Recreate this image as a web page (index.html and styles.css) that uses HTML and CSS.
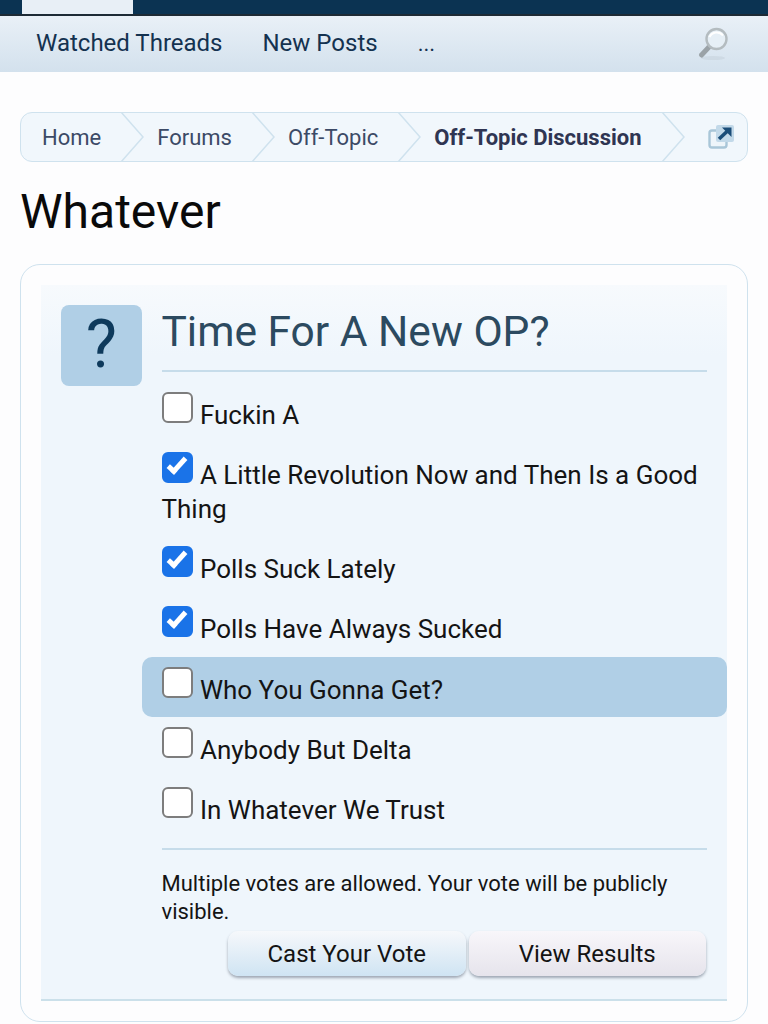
FILE: index.html
```html
<!DOCTYPE html>
<html>
<head>
  <meta charset="UTF-8">
  <meta name="viewport" content="width=device-width, initial-scale=1.0">
  <title>Whatever</title>
  <link rel="stylesheet" href="styles.css">
</head>
<body>
  <div class="top-bar">
    <div class="top-tab"></div>
  </div>

  <div class="sub-nav">
    <a class="sub-link">Watched Threads</a>
    <a class="sub-link">New Posts</a>
    <a class="sub-link sub-more">...</a>
    <svg class="search-icon" width="34" height="36" viewBox="0 0 34 36">
      <ellipse cx="16" cy="32" rx="12" ry="2" fill="#c3d0da" opacity="0.5"/>
      <path d="M12 21 L4.5 29" stroke="#9aa2a7" stroke-width="5" stroke-linecap="round"/>
      <circle cx="19.5" cy="13" r="10" fill="#e6eff6" stroke="#b4bcc0" stroke-width="2.4"/>
      <path d="M12.5 11 A8 8 0 0 1 26 9.5" fill="none" stroke="#ffffff" stroke-width="2"/>
    </svg>
  </div>

  <div class="page">
    <div class="breadcrumb">
      <a class="crumb">Home</a>
      <svg class="chevron" width="24" height="50" viewBox="0 0 24 50"><path d="M1 0 L23 25 L1 50" fill="none" stroke="#cfe2ee" stroke-width="1.5"/></svg>
      <a class="crumb">Forums</a>
      <svg class="chevron" width="24" height="50" viewBox="0 0 24 50"><path d="M1 0 L23 25 L1 50" fill="none" stroke="#cfe2ee" stroke-width="1.5"/></svg>
      <a class="crumb">Off-Topic</a>
      <svg class="chevron" width="24" height="50" viewBox="0 0 24 50"><path d="M1 0 L23 25 L1 50" fill="none" stroke="#cfe2ee" stroke-width="1.5"/></svg>
      <a class="crumb crumb-current">Off-Topic Discussion</a>
      <svg class="chevron" width="24" height="50" viewBox="0 0 24 50"><path d="M1 0 L23 25 L1 50" fill="none" stroke="#cfe2ee" stroke-width="1.5"/></svg>
      <svg class="jump-icon" width="27" height="26" viewBox="0 0 27 26">
        <rect x="1.5" y="6.5" width="17" height="17" rx="2.5" fill="#eef5fa" stroke="#a9c6d8" stroke-width="2.4"/>
        <rect x="8" y="1" width="18" height="17" rx="2" fill="#c2d9e9"/>
        <path d="M11 15 L20 6.5" stroke="#1a4d78" stroke-width="3.6"/>
        <path d="M14 3.5 L23.5 3.5 L23.5 13 Z" fill="#1a4d78"/>
      </svg>
    </div>

    <h1 class="page-title">Whatever</h1>

    <div class="poll-card">
      <div class="poll-inner">
        <div class="poll-icon">?</div>
        <div class="poll-main">
          <h2 class="poll-question">Time For A New OP?</h2>

          <ul class="poll-options">
            <li class="poll-option"><label><input type="checkbox"> Fuckin A</label></li>
            <li class="poll-option"><label><input type="checkbox" checked> A Little Revolution Now and Then Is a Good Thing</label></li>
            <li class="poll-option"><label><input type="checkbox" checked> Polls Suck Lately</label></li>
            <li class="poll-option"><label><input type="checkbox" checked> Polls Have Always Sucked</label></li>
            <li class="poll-option poll-option-hover"><label><input type="checkbox"> Who You Gonna Get?</label></li>
            <li class="poll-option"><label><input type="checkbox"> Anybody But Delta</label></li>
            <li class="poll-option"><label><input type="checkbox"> In Whatever We Trust</label></li>
          </ul>

          <p class="poll-note">Multiple votes are allowed. Your vote will be publicly visible.</p>

          <div class="poll-buttons">
            <button class="button button-primary">Cast Your Vote</button>
            <button class="button">View Results</button>
          </div>
        </div>
      </div>
    </div>
  </div>
</body>
</html>
```

FILE: styles.css
```css
/* Base styles */
body {
  font-family: Roboto, "Liberation Sans", sans-serif;
  margin: 0;
  background-color: #fdfdfe;
  color: #141414;
}

/* Top bars */
.top-bar {
  height: 14px;
  background-color: #0b3352;
  border-bottom: 2px solid #1d2a35;
  padding-left: 22px;
}

.top-tab {
  width: 111px;
  height: 14px;
  background-color: #e8eff6;
}

.sub-nav {
  display: flex;
  align-items: center;
  box-sizing: border-box;
  height: 56px;
  padding: 0 37px 2px 36px;
  background: linear-gradient(to bottom, #e9f0f7, #d3e1ed);
  font-size: 24px;
  color: #143250;
}

.sub-link {
  margin-right: 40px;
}

.sub-more {
  font-size: 22px;
}

.search-icon {
  margin-left: auto;
  margin-right: 0;
  margin-top: 2px;
}

.page {
  padding: 40px 20px 0 20px;
}

/* Breadcrumb */
.breadcrumb {
  display: flex;
  align-items: center;
  height: 48px;
  padding-left: 21px;
  background-color: #f1f7fc;
  border: 1px solid #cfe2ee;
  border-radius: 12px;
  font-size: 22px;
  color: #3c4a66;
  overflow: hidden;
}

.crumb {
  white-space: nowrap;
}

.crumb-current {
  font-weight: 700;
  color: #2f3552;
}

.chevron {
  flex: none;
  margin: 0 13px 0 19px;
}

.jump-icon {
  flex: none;
  margin-left: 10px;
  margin-top: -1px;
}

.page-title {
  font-size: 48px;
  font-weight: 400;
  line-height: 60px;
  margin: 20px 0 22px 0;
  color: #0a0a0a;
}

/* Poll */
.poll-card {
  padding: 20px;
  height: 716px;
  border: 1px solid #cfe2ee;
  border-radius: 20px;
}

.poll-inner {
  display: flex;
  height: 100%;
  box-sizing: border-box;
  padding: 20px 0 0 20px;
  background: linear-gradient(to bottom, #f7fafd, #eff6fc 70px);
  border-bottom: 2px solid #cbe0ea;
}

.poll-icon {
  flex: none;
  width: 80.5px;
  height: 81px;
  background-color: #b0cfe6;
  border-radius: 8px;
  font-size: 66px;
  line-height: 80px;
  text-align: center;
  color: #0e3a5c;
}

.poll-main {
  flex: 1;
  min-width: 0;
}

.poll-question {
  font-size: 42.5px;
  font-weight: 400;
  line-height: 54px;
  margin: 0 20px;
  padding-bottom: 11px;
  color: #2c4a60;
  border-bottom: 2px solid #c6dcea;
}

.poll-options {
  list-style: none;
  margin: 10px 0 0 0;
  padding: 0;
  font-size: 26px;
  line-height: 33.6px;
}

.poll-option {
  padding: 10px 20px 9.7px 20px;
  border-radius: 10px;
}

.poll-option-hover {
  background-color: #b0cfe6;
}

.poll-option input {
  appearance: none;
  -webkit-appearance: none;
  position: relative;
  display: inline-block;
  box-sizing: border-box;
  width: 31px;
  height: 31px;
  margin: 0 1px 0 0;
  vertical-align: 1px;
  background-color: #fff;
  border: 2px solid #7d7d7d;
  border-radius: 6px;
}

.poll-option input:checked {
  background-color: #1a73e8;
  border-color: #1a73e8;
}

.poll-option input:checked:after {
  content: "";
  position: absolute;
  left: 8px;
  top: 0;
  width: 10px;
  height: 20px;
  border: solid #fff;
  border-width: 0 5px 5px 0;
  transform: rotate(42deg);
  box-sizing: border-box;
}

.poll-note {
  font-size: 22px;
  line-height: 28px;
  margin: 10px 20px 0 20px;
  padding-top: 20px;
  border-top: 2px solid #c6dcea;
}

.poll-buttons {
  display: flex;
  justify-content: flex-end;
  gap: 3px;
  margin: 5px 21px 0 0;
}

.button {
  width: 237.5px;
  height: 45px;
  padding: 1px 0 0 0;
  font-family: inherit;
  font-size: 24px;
  color: #141414;
  border: 0;
  border-radius: 10px;
  background: linear-gradient(to bottom, #f8f6fa, #e6e4ec);
  box-shadow: 0 2px 3px rgba(60, 70, 90, 0.45);
}

.button-primary {
  background: linear-gradient(to bottom, #f6f8fb, #cfe4f3);
}
```
